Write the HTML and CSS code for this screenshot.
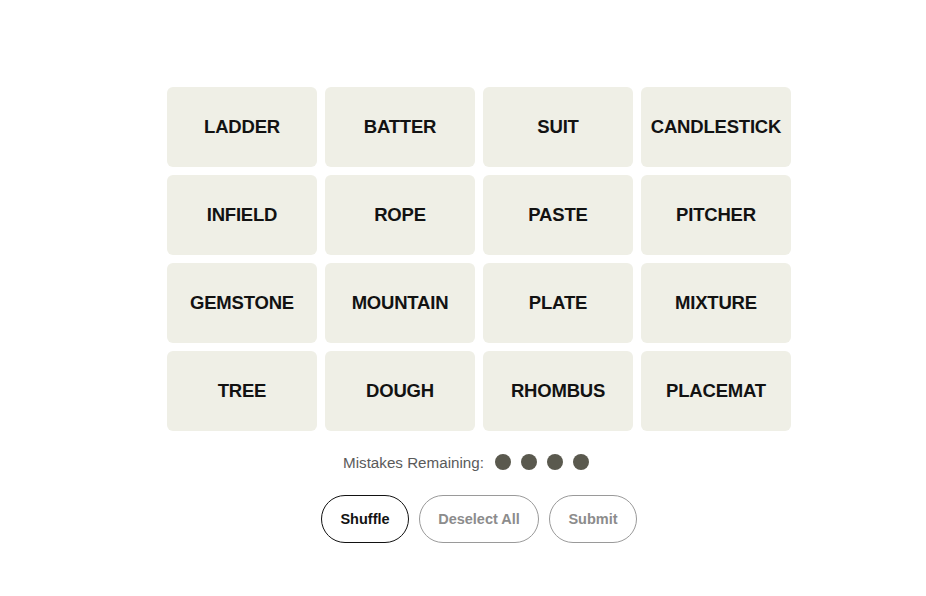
FILE: index.html
```html
<!DOCTYPE html>
<html lang="en">
<head>
    <meta charset="UTF-8">
    <title>Connections</title>
    <link rel="stylesheet" href="styles.css">
</head>
<body>
    <div class="page">
        <div class="board">
            <div class="tile">LADDER</div>
            <div class="tile">BATTER</div>
            <div class="tile">SUIT</div>
            <div class="tile">CANDLESTICK</div>
            <div class="tile">INFIELD</div>
            <div class="tile">ROPE</div>
            <div class="tile">PASTE</div>
            <div class="tile">PITCHER</div>
            <div class="tile">GEMSTONE</div>
            <div class="tile">MOUNTAIN</div>
            <div class="tile">PLATE</div>
            <div class="tile">MIXTURE</div>
            <div class="tile">TREE</div>
            <div class="tile">DOUGH</div>
            <div class="tile">RHOMBUS</div>
            <div class="tile">PLACEMAT</div>
        </div>
        <div class="mistakes">
            <span class="label">Mistakes Remaining:</span>
            <span class="dots">
                <span class="dot"></span>
                <span class="dot"></span>
                <span class="dot"></span>
                <span class="dot"></span>
            </span>
        </div>
        <div class="controls">
            <button class="btn active">Shuffle</button>
            <button class="btn wide">Deselect All</button>
            <button class="btn">Submit</button>
        </div>
    </div>
</body>
</html>
```

FILE: styles.css
```css
body {
    margin: 0;
    background: #fff;
    font-family: "Liberation Sans", Arial, sans-serif;
}

.page {
    padding: 87px 0 0 32px;
    display: flex;
    flex-direction: column;
    align-items: center;
}

.board {
    display: grid;
    grid-template-columns: repeat(4, 150px);
    grid-auto-rows: 80px;
    gap: 8px;
}

.tile {
    background-color: #efefe6;
    border-radius: 6px;
    display: grid;
    place-items: center;
    font-weight: bold;
    font-size: 18.5px;
    color: #121212;
    letter-spacing: -0.2px;
}

.mistakes {
    margin-top: 22px;
    display: flex;
    align-items: center;
    gap: 11px;
    color: #5a5a5a;
    font-size: 15.2px;
    margin-left: -26px;
    height: 18px;
}

.dots {
    display: flex;
    gap: 10px;
}

.dot {
    width: 16px;
    height: 16px;
    border-radius: 50%;
    background-color: #5a594e;
}

.controls {
    margin-top: 24px;
    display: flex;
    gap: 10px;
}

.btn {
    height: 48px;
    width: 88px;
    border-radius: 24px;
    background: #fff;
    border: 1px solid #9a9a9a;
    color: #8c8c8c;
    font-family: "Liberation Sans", Arial, sans-serif;
    font-weight: bold;
    font-size: 14.5px;
    padding: 0;
}

.btn.wide {
    width: 120px;
}

.btn.active {
    border-color: #121212;
    color: #121212;
}
```
